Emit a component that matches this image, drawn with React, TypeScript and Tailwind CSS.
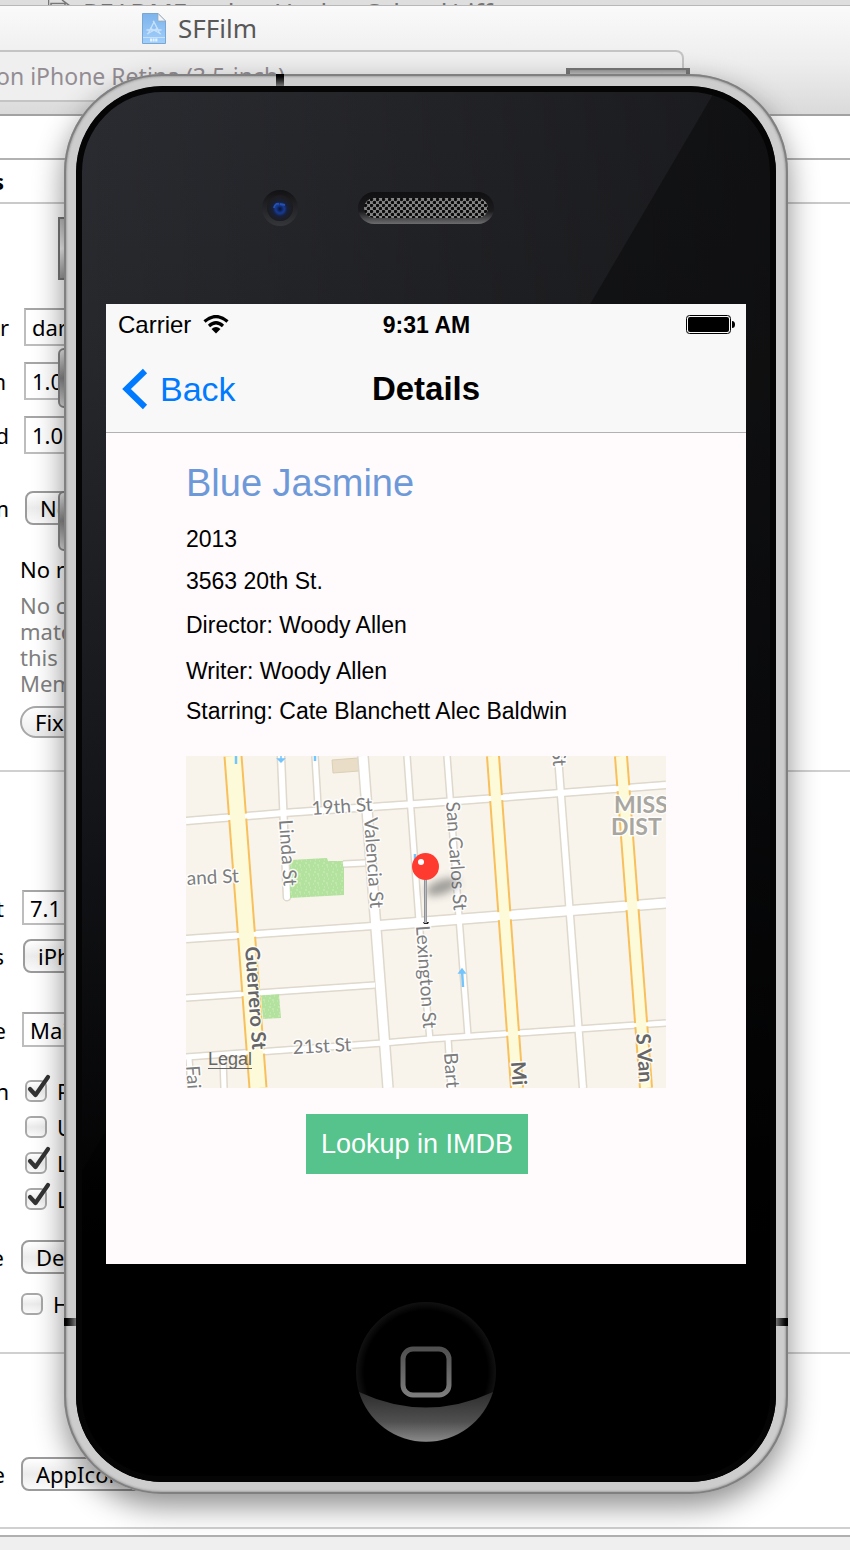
import type { ReactNode } from "react";

const systemFont = "font-['Noto_Sans',sans-serif]";
const phoneFont = "font-['Liberation_Sans',Arial,sans-serif]";

/* ---------- editor window behind the simulator ---------- */

function Row({ id, label, labelWidth, className, children }: {
  id: string;
  label: string;
  labelWidth: string;
  className: string;
  children: ReactNode;
}) {
  return (
    <div className={`flex items-center ${className}`}>
      <label htmlFor={id} className={`flex shrink-0 justify-end whitespace-nowrap ${labelWidth}`}>{label}</label>
      {children}
    </div>
  );
}

function TextField({ id, value, className }: { id: string; value: string; className: string }) {
  return (
    <input
      id={id}
      type="text"
      defaultValue={value}
      className={`w-40 border-2 border-[#bdbdbd] border-t-[#a6a6a6] bg-white pl-1.5 text-[22px] leading-7 text-black outline-none ${className}`}
    />
  );
}

function PopUp({ id, value, className }: { id: string; value: string; className: string }) {
  return (
    <select
      id={id}
      defaultValue={value}
      className={`h-[34px] w-40 appearance-none rounded-lg border-2 border-[#9b9b9b] bg-linear-to-b from-white via-[#ececec] to-[#fafafa] pl-[13px] text-[22px] leading-7 text-black ${className}`}
    >
      <option>{value}</option>
    </select>
  );
}

function Tick({ id, label, checked, className }: { id: string; label: string; checked?: boolean; className: string }) {
  return (
    <span className={`flex items-center ${className}`}>
      <span className="relative flex">
        <input
          id={id}
          type="checkbox"
          defaultChecked={checked}
          className="peer size-[22px] appearance-none rounded-md border-2 border-[#a8a8a8] bg-linear-to-b from-white via-[#ebebeb] to-[#fafafa]"
        />
        <svg viewBox="0 0 24 28" className="pointer-events-none absolute -top-1.5 left-0.5 hidden h-7 w-6 peer-checked:block" fill="none">
          <path d="M3 15 L8.500 21 L21 3" stroke="#333" strokeWidth="4.200" strokeLinecap="round" strokeLinejoin="round" />
        </svg>
      </span>
      <label htmlFor={id} className="pl-2.5">{label}</label>
    </span>
  );
}

function ProjectIcon() {
  return (
    <svg viewBox="0 0 24 31" className="h-[31px] w-6 shrink-0">
      <defs>
        <linearGradient id="sheet" x1="0" y1="0" x2="0" y2="1">
          <stop offset="0" stopColor="#7db4ec" />
          <stop offset="1" stopColor="#a2cffb" />
        </linearGradient>
      </defs>
      <path d="M.5 .5H16L23.500 8V30.500H.500Z" fill="url(#sheet)" stroke="#7aa6d2" />
      <path d="M16 .5V8H23.500Z" fill="#f5f5f5" stroke="#9aa7b5" strokeWidth=".7" />
      <path d="M6 21 L12 9 L18 21 M12 9 L11 8 M4.500 17H19.500 M8 15 L19 21 M16 15 L5 21" fill="none" stroke="#c9e2fb" strokeWidth="1.300" />
      <path d="M1 24.500H23" stroke="#c4e0fb" />
      <path d="M8 27H16" stroke="#e4f2ff" strokeWidth="3" strokeDasharray="2 .6" />
    </svg>
  );
}

function EditorWindow() {
  return (
    <div className={`flex min-w-0 flex-col overflow-hidden bg-white text-[22px] leading-[26px] text-black [grid-area:1/1] ${systemFont}`}>
      <div className="flex h-1.5 items-start gap-3 overflow-hidden border-b border-[#b8b8b8] bg-[#dedede] pl-12 text-[26px] leading-6 text-[#737373]">
        <svg viewBox="0 0 23 6" className="h-1.5 w-[23px] shrink-0" fill="#eee" stroke="#777">
          <path d="M.5 0V6M3 6V3.500H17V6M14 0L22 6" strokeWidth="1.500" />
        </svg>
        <span className="whitespace-nowrap">README.md — Hacker School/riff</span>
      </div>

      <header className="flex h-[110px] flex-col border-b-2 border-[#a2a2a2] bg-linear-to-b from-[#fafafa] via-[#eee] to-[#dadada]">
        <div className="flex h-11 items-center gap-3 pl-[142px] text-[26px] text-[#585858]">
          <ProjectIcon />
          <span>SFFilm</span>
        </div>
        <div className="mr-[166px] flex h-[52px] items-center rounded-r-lg border-2 border-l-0 border-[#c4c4c4] bg-[#efefef] text-[23px] text-[#938d93]">
          <span className="flex w-[285px] justify-end whitespace-nowrap">on iPhone Retina (3.5-inch)</span>
        </div>
      </header>

      <div className="h-11 border-b-2 border-[#b2b2b2]" />
      <div className="flex h-11 items-center border-b-2 border-[#cacaca] font-bold">
        <span className="flex w-1 justify-end">s</span>
      </div>

      <section className="border-b-2 border-[#d0d0d0] pt-[104px] pb-8">
        <Row id="bundle" label="r" labelWidth="w-[9px]" className="">
          <TextField id="bundle" value="dar" className="ml-[15px] h-[38px]" />
        </Row>
        <Row id="version" label="n" labelWidth="w-[6px]" className="mt-4">
          <TextField id="version" value="1.0" className="ml-[18px] h-[38px]" />
        </Row>
        <Row id="build" label="d" labelWidth="w-[9px]" className="mt-4">
          <TextField id="build" value="1.0" className="ml-[15px] h-[38px]" />
        </Row>
        <Row id="team" label="m" labelWidth="w-[9px]" className="mt-[37px]">
          <PopUp id="team" value="None" className="ml-4" />
        </Row>
        <div className="mt-[31px] pl-5">
          <p>No r</p>
          <p className="mt-2.5 text-[#808080]">No c<br />matc<br />this<br />Mem</p>
          <button type="button" className="mt-2.5 flex h-8 w-28 items-center rounded-full border-2 border-[#a8a8a8] bg-linear-to-b from-white to-[#ececec] pl-[13px]">
            Fix
          </button>
        </div>
      </section>

      <section className="border-b-2 border-[#d0d0d0] pt-[118px] pb-9">
        <Row id="target" label="t" labelWidth="w-1" className="">
          <TextField id="target" value="7.1" className="ml-[18px] h-[35px]" />
        </Row>
        <Row id="devices" label="s" labelWidth="w-1" className="mt-3.5">
          <PopUp id="devices" value="iPhone" className="ml-[19px]" />
        </Row>
        <Row id="interface" label="e" labelWidth="w-[6px]" className="mt-[39px]">
          <TextField id="interface" value="Main" className="ml-4 h-[35px]" />
        </Row>
        <div className="mt-[26px] flex flex-col">
          <Row id="portrait" label="n" labelWidth="w-[9px]" className="h-9">
            <Tick id="portrait" label="P" checked className="ml-4" />
          </Row>
          <Tick id="upside" label="U" className="ml-[25px] h-9" />
          <Tick id="left" label="L" checked className="ml-[25px] h-9" />
          <Tick id="right" label="L" checked className="ml-[25px] h-9" />
        </div>
        <Row id="style" label="e" labelWidth="w-1" className="mt-[23px]">
          <PopUp id="style" value="Default" className="ml-[17px]" />
        </Row>
        <Tick id="hide" label="H" className="mt-[18px] ml-[21px] h-6" />
      </section>

      <section className="border-b-2 border-[#d0d0d0] pt-[103px] pb-9">
        <Row id="icons" label="e" labelWidth="w-[5px]" className="">
          <PopUp id="icons" value="AppIcon" className="ml-4" />
        </Row>
      </section>
      <footer className="mt-1.5 min-h-3.5 flex-1 border-t-2 border-[#b0b0b0] bg-[#efefef]" />
    </div>
  );
}

/* ---------- map ---------- */

const minorRoads: [string, number][] = [
  ["M95 0 L101 141", 6],
  ["M129 0 L132 50", 5],
  ["M177 0 L202 332", 9],
  ["M221 0 L233 165 L244 284", 5],
  ["M261 0 L273 161 L282 280", 5],
  ["M372 0 L397 332", 6],
  ["M262 282 L265 332", 5],
  ["M0 65 L97 57 L244 47 L480 29", 6],
  ["M0 183 L187 170", 6],
  ["M187 170 L480 147", 9],
  ["M0 242 L189 229", 5],
  ["M0 301 L197 287 L244 283 L480 267", 5],
  ["M3 302 L5 332", 5],
  ["M37 302 L38 332", 5],
  ["M157 108 L179 107", 5],
];

const majorRoads: [string, number][] = [
  ["M47 0 L72 332", 15],
  ["M307 0 L331 332", 10],
  ["M435 0 L460 332", 10],
];

const streetNames: [string, number, number, number, boolean][] = [
  ["19th St", 126, 59, -4, false],
  ["and St", 1, 129, -3, false],
  ["21st St", 107, 298, -3, false],
  ["Linda St", 93, 64, 86, false],
  ["Valencia St", 178, 62, 86, false],
  ["Lexington St", 230, 170, 86, false],
  ["San Carlos St", 260, 46, 86, false],
  ["St", 366, -6, 86, false],
  ["Bart", 258, 297, 86, false],
  ["Fai", 0, 310, 86, false],
  ["Guerrero St", 59, 191, 86, true],
  ["Mi", 325, 306, 86, true],
  ["S Van", 450, 278, 86, true],
];

function StreetMap() {
  return (
    <div className="relative">
      <svg viewBox="0 0 480 332" className="block w-full" role="img" aria-label="Map">
        <defs>
          <filter id="soft" x="-50%" y="-100%" width="200%" height="300%">
            <feGaussianBlur stdDeviation="4" />
          </filter>
          <pattern id="grass" width="9" height="9" patternUnits="userSpaceOnUse">
            <rect width="9" height="9" fill="#b3e29e" />
            <path d="M1 2h1M5 1h2M3 5h1M7 6h1M2 8h2M6 3h1" stroke="#cdeebd" />
          </pattern>
          <linearGradient id="needle">
            <stop offset="0" stopColor="#777b80" />
            <stop offset=".5" stopColor="#b9bcc0" />
            <stop offset="1" stopColor="#85898e" />
          </linearGradient>
        </defs>
        <rect width="480" height="332" fill="#f8f4ec" />
        <path d="M146 4L172 2L173 15L147 17Z" fill="#e9ddc7" stroke="#dccfb5" />
        <g fill="none" stroke="#dfd8cc">
          {minorRoads.map(([d, w]) => <path key={d} d={d} strokeWidth={w + 3} strokeLinecap={d.startsWith("M95") ? "round" : "butt"} />)}
        </g>
        <path d="M104 104L141 102L142 105L158 105V139L104 142Z" fill="url(#grass)" />
        <path d="M75 239L93 238L95 262L77 263Z" fill="url(#grass)" />
        <g fill="none" stroke="#fff">
          {minorRoads.map(([d, w]) => <path key={d} d={d} strokeWidth={w} strokeLinecap={d.startsWith("M95") ? "round" : "butt"} />)}
        </g>
        <g fill="none">
          {majorRoads.map(([d, w]) => <path key={d} d={d} strokeWidth={w + 4} stroke="#f7c05c" />)}
          {minorRoads.slice(7, 12).map(([d, w]) => <path key={d} d={d} strokeWidth={w - 1} stroke="#fff" />)}
          {majorRoads.map(([d, w]) => <path key={d} d={d} strokeWidth={w} stroke="#fdfad9" />)}
        </g>
        <g stroke="#74c5fb" strokeWidth="2.500" fill="none">
          <path d="M50 0V8M129 0V5M277 231L276 214M229 98V104" />
          <path d="M92 3H98L95 6ZM95 0V4M273 217L276 213L279 217Z" strokeWidth="1.500" fill="#74c5fb" />
        </g>
        <g className="font-['Lato',sans-serif]" fontSize="19" stroke="#fff" strokeOpacity=".85" strokeWidth="3" strokeLinejoin="round" paintOrder="stroke">
          {streetNames.map(([name, x, y, angle, strong]) => (
            <text key={`${name}-${x}`} transform={`translate(${x} ${y}) rotate(${angle})`} fill={strong ? "#666" : "#7d7d7d"} fontSize={strong ? 20 : 19} fontWeight={strong ? 700 : 400}>{name}</text>
          ))}
          <g fontSize="23" fontWeight="700" fill="#a8a6a0">
            <text x="428" y="57">MISS</text>
            <text x="425" y="79">DIST</text>
          </g>
        </g>
        <ellipse cx="256" cy="131" rx="17" ry="7" fill="#444" opacity=".5" transform="rotate(-20 256 131)" filter="url(#soft)" />
        <path d="M237 166L238 168L242 168L243 166Z" fill="#222" />
        <rect x="238" y="120" width="3" height="47" fill="url(#needle)" />
        <circle cx="239.500" cy="110.500" r="13.500" fill="#ff3b30" />
        <circle cx="235" cy="106" r="3" fill="#fff" />
      </svg>
      <a href="#legal" className="absolute bottom-[19px] left-[22px] border-b border-[#666] text-[18px] leading-[18px] text-[#666]">Legal</a>
    </div>
  );
}

/* ---------- phone ---------- */

function Camera() {
  return (
    <svg viewBox="0 0 36 36" className="mr-[60px] size-9 justify-self-end">
      <defs>
        <linearGradient id="ring" x1="0" y1="0" x2="0" y2="1">
          <stop offset="0" stopColor="#121215" />
          <stop offset="1" stopColor="#35363a" />
        </linearGradient>
        <radialGradient id="lens">
          <stop offset="0" stopColor="#0a1230" />
          <stop offset=".35" stopColor="#163a94" />
          <stop offset=".6" stopColor="#18203a" />
          <stop offset="1" stopColor="#1d1d20" />
        </radialGradient>
      </defs>
      <circle cx="18" cy="18" r="18" fill="url(#ring)" />
      <circle cx="18" cy="18" r="13" fill="#1d1d20" />
      <circle cx="18" cy="19" r="12" fill="url(#lens)" />
      <path d="M12 18Q13 13 17 14M18 14L23 15" stroke="#2450b0" strokeWidth="2" fill="none" />
    </svg>
  );
}

function Speaker() {
  return (
    <svg viewBox="0 0 136 32" className="h-8 w-[136px]">
      <defs>
        <linearGradient id="slot" x1="0" y1="0" x2="0" y2="1">
          <stop offset="0" stopColor="#101012" />
          <stop offset=".6" stopColor="#1b1b1e" />
          <stop offset="1" stopColor="#6c6c6e" />
        </linearGradient>
        <pattern id="mesh" width="6" height="6" patternUnits="userSpaceOnUse">
          <rect width="6" height="6" fill="#868686" />
          <circle cx="1.500" cy="1.500" r="1.700" fill="#0b0b0b" />
          <circle cx="4.500" cy="4.500" r="1.700" fill="#0b0b0b" />
        </pattern>
      </defs>
      <rect width="136" height="32" rx="16" fill="url(#slot)" />
      <rect x="6" y="6" width="124" height="20" rx="10" fill="url(#mesh)" />
    </svg>
  );
}

function HomeButton() {
  return (
    <button type="button" aria-label="Home" className="size-[140px] rounded-full">
      <svg viewBox="0 0 140 140" className="size-full">
        <defs>
          <radialGradient id="dish">
            <stop offset=".88" stopColor="#000" />
            <stop offset="1" stopColor="#111" />
          </radialGradient>
          <linearGradient id="shine" x1="0" y1="0" x2="0" y2="1">
            <stop offset="0" stopColor="#2c2c2c" />
            <stop offset=".6" stopColor="#505050" />
            <stop offset="1" stopColor="#8a8a8a" />
          </linearGradient>
          <linearGradient id="square" x1="0" y1="0" x2="0" y2="1">
            <stop offset="0" stopColor="#505050" />
            <stop offset="1" stopColor="#7c7c7c" />
          </linearGradient>
        </defs>
        <circle cx="70" cy="70" r="70" fill="url(#dish)" />
        <path d="M3 90Q70 121 137 90A70 70 0 0 1 3 90Z" fill="url(#shine)" />
        <rect x="47" y="47" width="46" height="46" rx="10" fill="#000" stroke="url(#square)" strokeWidth="5" />
      </svg>
    </button>
  );
}

function DetailsScreen() {
  return (
    <main className={`flex flex-col bg-[#fffbfc] text-black ${phoneFont}`}>
      <header className="border-b border-[#b2b2b2] bg-[#f8f8f8]">
        <div className="grid h-10 grid-cols-[1fr_auto_1fr] items-center pt-0.5 pr-[11px] pl-3 text-[24px] leading-7">
          <span className="flex items-center gap-3">
            Carrier
            <svg viewBox="0 0 26 19" className="mb-0.5 h-[19px] w-[26px]" fill="none" stroke="#000" strokeWidth="3.200">
              <path d="M1.500 6.500Q13 -3.500 24.500 6.500M6 11Q13 4.500 20 11" />
              <path d="M8.500 14Q13 10 17.500 14L13 18.500Z" fill="#000" stroke="none" />
            </svg>
          </span>
          <span className="text-[23px] font-bold">9:31 AM</span>
          <svg viewBox="0 0 49 20" className="h-5 w-[49px] justify-self-end">
            <rect x=".500" y=".500" width="44" height="18" rx="3" fill="none" stroke="#000" />
            <rect x="2" y="2" width="41" height="15" rx="2" fill="#000" />
            <path d="M46 6Q49 6 49 9.500Q49 13 46 13Z" fill="#000" />
          </svg>
        </div>
        <nav className="grid h-[88px] grid-cols-[1fr_auto_1fr] items-center px-4 pt-px">
          <button type="button" className="flex items-center gap-3 justify-self-start text-[34px] leading-10 text-[#007aff]">
            <svg viewBox="0 0 26 42" className="h-[42px] w-[26px]" fill="none" stroke="#007aff" strokeWidth="6">
              <path d="M23 3L4.500 21L23 39" />
            </svg>
            Back
          </button>
          <h1 className="text-[33px] leading-10 font-bold">Details</h1>
        </nav>
      </header>

      <div className="flex flex-col px-20 pt-7 pb-[90px] text-[23px] leading-7">
        <h2 className="text-[38px] leading-[44px] text-[#6e99d9]">Blue Jasmine</h2>
        <p className="mt-5">2013</p>
        <p className="mt-3.5">3563 20th St.</p>
        <p className="mt-4">Director: Woody Allen</p>
        <p className="mt-[18px]">Writer: Woody Allen</p>
        <p className="mt-3">Starring: Cate Blanchett Alec Baldwin</p>
        <div className="mt-[31px]">
          <StreetMap />
        </div>
        <button type="button" className="mt-[26px] ml-[120px] h-[60px] self-start bg-[#55c38b] px-[15px] text-[27px] leading-8 text-white">
          Lookup in IMDB
        </button>
      </div>
    </main>
  );
}

function Phone() {
  return (
    <div className="flex items-start justify-center pt-[74px] pb-14 pl-0.5 [grid-area:1/1]">
      <div className="relative w-full max-w-[724px]">
        <div className="absolute -top-1.5 right-[98px] h-3 w-[124px] border-x-4 border-t-2 border-[#777] bg-linear-to-b from-[#999] to-white" />
        <div className="absolute top-[143px] -left-1.5 h-[63px] w-4 border-2 border-[#777] bg-linear-to-b from-[#bbb] via-[#f4f4f4] to-[#999]" />
        <div className="absolute top-[274px] -left-1.5 h-[60px] w-4 rounded-md border-2 border-[#888] bg-linear-to-b from-[#eee] via-[#888] to-[#ddd]" />
        <div className="absolute top-[417px] -left-1.5 h-[60px] w-4 rounded-md border-2 border-[#888] bg-linear-to-b from-[#eee] via-[#888] to-[#ddd]" />
        <div className="relative rounded-[98px] bg-[#cdcdcd] p-3 shadow-[inset_0_0_0_2px_#808080,inset_0_0_2px_3px_#a5a5a5,0_12px_30px_rgba(0,0,0,0.45)]">
          <div className="absolute top-0 left-[212px] h-3 w-2 bg-linear-to-b from-black to-[#777]" />
          <div className="absolute bottom-[168px] left-0 h-2 w-3 bg-linear-to-r from-black to-[#777]" />
          <div className="absolute right-0 bottom-[168px] h-2 w-3 bg-linear-to-l from-black to-[#777]" />
          <div className="relative overflow-hidden rounded-[86px] bg-[linear-gradient(to_right,transparent,rgba(0,0,0,0.4)),linear-gradient(#2b2c31,#26272b_20%,#15161a_50%,#000_84%)]">
            <div className="absolute inset-0 bg-black/35 [clip-path:polygon(91.7%_0,100%_0,100%_100%,0_100%,0_78.5%)]" />
            <div className="relative rounded-[86px] border-[6px] border-[#050506] px-6">
              <div className="grid h-[212px] grid-cols-[1fr_auto_1fr] items-center pt-5">
                <Camera />
                <Speaker />
              </div>
              <DetailsScreen />
              <div className="flex h-[212px] items-center justify-center pt-1">
                <HomeButton />
              </div>
            </div>
          </div>
        </div>
      </div>
    </div>
  );
}

export default function App() {
  return (
    <div className="grid min-h-screen grid-cols-[minmax(0,1fr)] overflow-hidden">
      <EditorWindow />
      <Phone />
    </div>
  );
}
